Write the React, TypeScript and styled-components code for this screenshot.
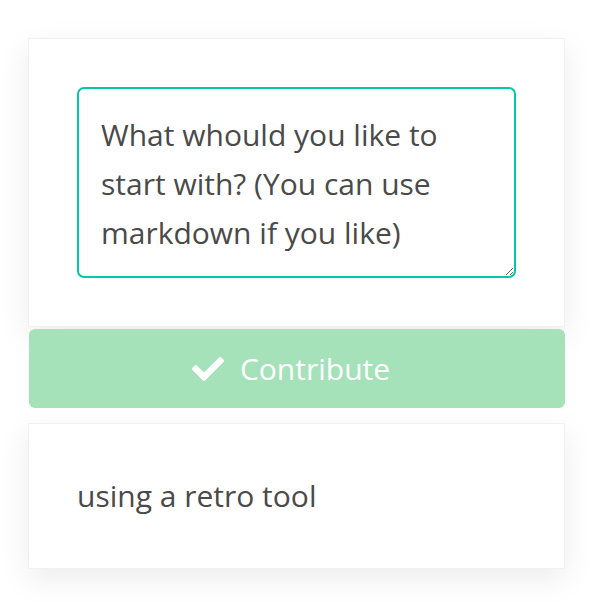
import React from "react";
import styled, { createGlobalStyle } from "styled-components";
import { FaCheck } from "react-icons/fa";

const GlobalStyle = createGlobalStyle`
  html, body {
    margin: 0;
    padding: 0;
    background: #ffffff;
  }
  body {
    font-family: "Open Sans", "Noto Sans", sans-serif;
    color: #4a4a4a;
  }
`;

const Page = styled.div`
  padding: 38px 28px;
  display: flex;
  flex-direction: column;
`;

const Card = styled.div<{ $spaced?: boolean }>`
  background: #ffffff;
  border: 1px solid #f1f1f1;
  box-shadow: 0 10px 30px rgba(0, 0, 0, 0.08);
  padding: 48px;
  margin-top: ${(p) => (p.$spaced ? "15px" : "0")};
`;

const Field = styled.textarea`
  display: block;
  width: 100%;
  box-sizing: border-box;
  height: 191px;
  border: 2px solid #00c9a7;
  border-radius: 7px;
  padding: 21px 22px 17px;
  font-family: inherit;
  font-size: 30px;
  line-height: 49px;
  color: #4a4a4a;
  outline: none;
  resize: vertical;
  &::placeholder {
    color: #4a4a4a;
    opacity: 1;
  }
`;

const SubmitButton = styled.button`
  display: flex;
  align-items: center;
  justify-content: center;
  gap: 16px;
  margin: 2px 0 0 1px;
  padding: 0 12px 0 0;
  height: 79px;
  border: none;
  border-radius: 6px;
  background: #a5e2b9;
  color: #ffffff;
  font-family: inherit;
  font-size: 30px;
  cursor: not-allowed;
  svg {
    width: 32px;
    height: 32px;
  }
`;

const Idea = styled.p`
  margin: 0;
  font-size: 30px;
  line-height: 48px;
  color: #4a4a4a;
`;

export default function App() {
  return (
    <>
      <GlobalStyle />
      <Page>
        <Card>
          <Field placeholder="What whould you like to start with? (You can use markdown if you like)" />
        </Card>
        <SubmitButton disabled>
          <FaCheck />
          Contribute
        </SubmitButton>
        <Card $spaced>
          <Idea>using a retro tool</Idea>
        </Card>
      </Page>
    </>
  );
}
